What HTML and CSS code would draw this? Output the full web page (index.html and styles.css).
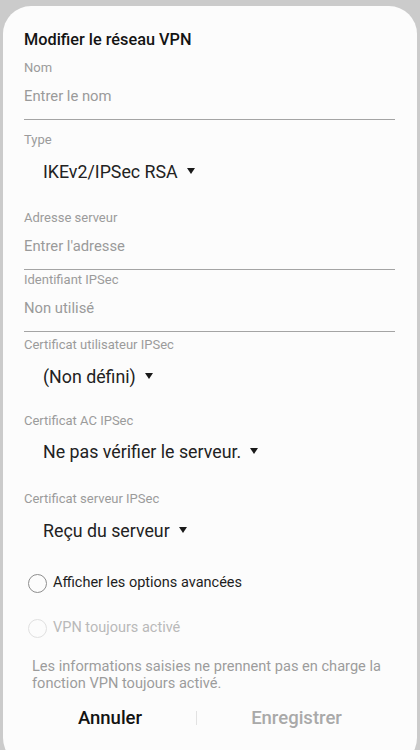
FILE: index.html
```html
<!DOCTYPE html>
<html lang="fr">
<head>
<meta charset="utf-8">
<link rel="stylesheet" href="styles.css">
</head>
<body>
<div class="card">
  <div class="title">Modifier le réseau VPN</div>

  <div class="label m8">Nom</div>
  <div class="input">Entrer le nom</div>

  <div class="label m12">Type</div>
  <div class="select m12">IKEv2/IPSec RSA <span class="caret"></span></div>

  <div class="label m26">Adresse serveur</div>
  <div class="input">Entrer l'adresse</div>

  <div class="label m2">Identifiant IPSec</div>
  <div class="input">Non utilisé</div>

  <div class="label m5">Certificat utilisateur IPSec</div>
  <div class="select m12">(Non défini) <span class="caret"></span></div>

  <div class="label m24">Certificat AC IPSec</div>
  <div class="select m11">Ne pas vérifier le serveur. <span class="caret"></span></div>

  <div class="label m27">Certificat serveur IPSec</div>
  <div class="select m12">Reçu du serveur <span class="caret"></span></div>

  <div class="radio m28"><span class="circle"></span>Afficher les options avancées</div>
  <div class="radio disabled m21"><span class="circle"></span>VPN toujours activé</div>

  <div class="info">Les informations saisies ne prennent pas en charge la fonction VPN toujours activé.</div>

  <div class="buttons">
    <div class="btn">Annuler</div>
    <div class="divider"></div>
    <div class="btn off">Enregistrer</div>
  </div>
</div>
</body>
</html>
```

FILE: styles.css
```css
html, body {
  margin: 0;
  padding: 0;
  background: #cbcbcb;
  font-family: Roboto, "Noto Sans", "Liberation Sans", sans-serif;
}
body {
  width: 420px;
  height: 750px;
  overflow: hidden;
  padding-top: 6px;
  box-sizing: border-box;
}
.card {
  margin-left: 3px;
  width: 414px;
  height: 760px;
  background: #fcfcfc;
  border-radius: 28px;
  box-sizing: border-box;
  padding: 22px 22px 0 21px;
  display: flex;
  flex-direction: column;
}
.title {
  font-size: 16.3px;
  line-height: 24px;
  font-weight: 500;
  color: #141414;
}
.label {
  font-size: 13px;
  line-height: 16px;
  color: #9b9b9b;
}
.input {
  margin-top: 10px;
  font-size: 14.8px;
  line-height: 20px;
  color: #9a9a9a;
  padding-bottom: 13px;
  border-bottom: 1px solid #a4a4a4;
}
.select {
  padding-left: 19px;
  font-size: 17.8px;
  line-height: 24px;
  color: #222;
  display: flex;
  align-items: center;
}
.caret {
  display: inline-block;
  margin-left: 9px;
  width: 0;
  height: 0;
  border-left: 4.5px solid transparent;
  border-right: 4.5px solid transparent;
  border-top: 6px solid #1a1a1a;
  margin-top: -2px;
}
.m2 { margin-top: 2px; }
.m5 { margin-top: 5px; }
.m8 { margin-top: 8px; }
.m11 { margin-top: 11px; }
.m12 { margin-top: 12px; }
.m21 { margin-top: 21px; }
.m24 { margin-top: 24px; }
.m26 { margin-top: 26px; }
.m27 { margin-top: 27px; }
.m28 { margin-top: 28px; }
.radio {
  display: flex;
  align-items: center;
  padding-left: 4px;
  font-size: 14.5px;
  line-height: 24px;
  color: #1e1e1e;
}
.circle {
  width: 17px;
  height: 17px;
  border: 1.5px solid #8e8e8e;
  border-radius: 50%;
  margin-right: 6px;
}
.radio.disabled { color: #b9b9b9; }
.radio.disabled .circle { border-color: #e0e0e0; }
.info {
  margin-top: 18px;
  padding-left: 8px;
  font-size: 14.6px;
  line-height: 17px;
  color: #9c9c9c;
}
.buttons {
  margin-top: 12px;
  display: grid;
  grid-template-columns: 172px 1px 1fr;
  align-items: center;
  width: 372px;
  height: 28px;
}
.btn {
  text-align: center;
  font-size: 18.5px;
  font-weight: 500;
  color: #121212;
}
.btn.off { color: #a9a9a9; }
.divider {
  width: 1px;
  height: 14px;
  background: #e2e2e2;
}
```
